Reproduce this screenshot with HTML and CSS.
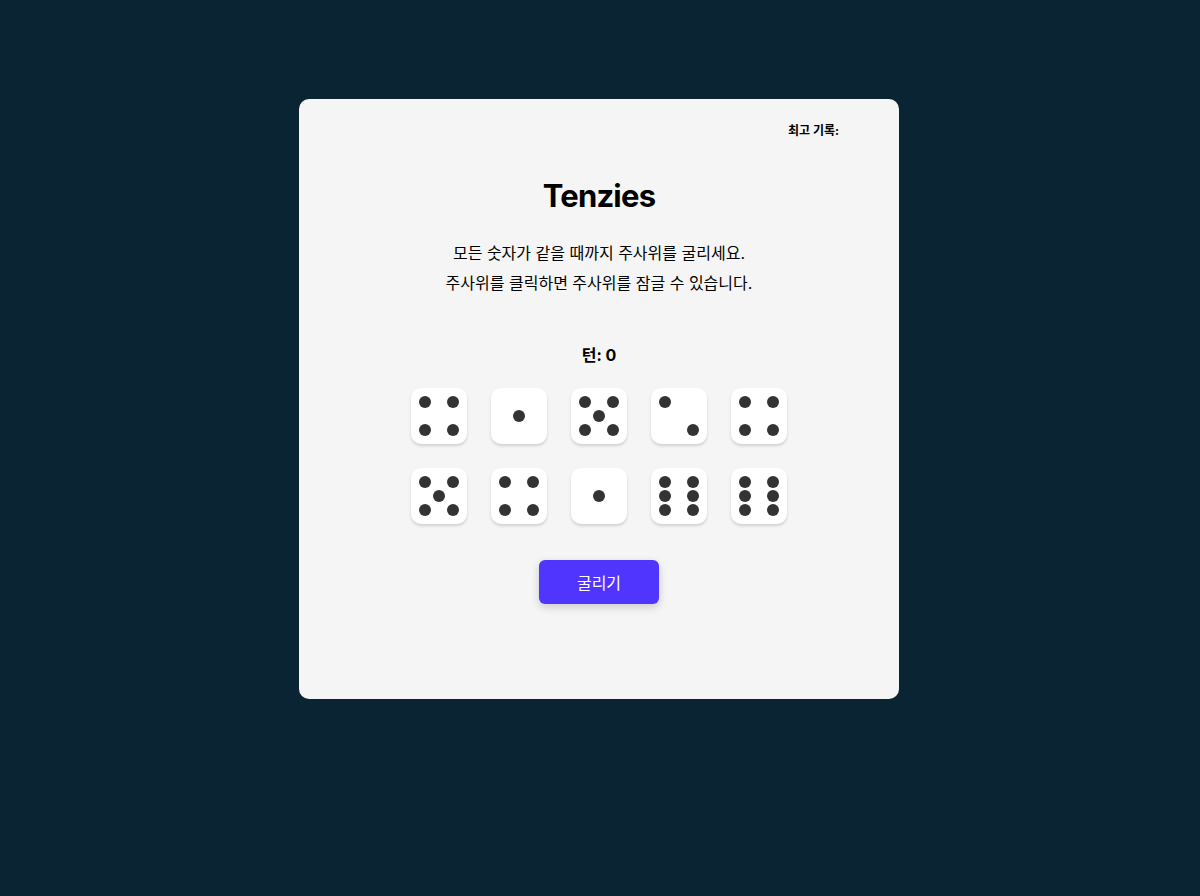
FILE: index.html
```html
<!DOCTYPE html>
<html lang="ko">
<head>
<meta charset="utf-8">
<title>Tenzies</title>
<link rel="stylesheet" href="styles.css">
</head>
<body>
<main class="card">
  <p class="best">최고 기록:</p>
  <h1 class="title">Tenzies</h1>
  <p class="desc">모든 숫자가 같을 때까지 주사위를 굴리세요.<br>주사위를 클릭하면 주사위를 잠글 수 있습니다.</p>
  <p class="turns">턴: 0</p>
  <div class="dice">
    <div class="die"><span class="pip tl"></span><span class="pip tr"></span><span class="pip bl"></span><span class="pip br"></span></div>
    <div class="die"><span class="pip c"></span></div>
    <div class="die"><span class="pip tl"></span><span class="pip tr"></span><span class="pip c"></span><span class="pip bl"></span><span class="pip br"></span></div>
    <div class="die"><span class="pip tl"></span><span class="pip br"></span></div>
    <div class="die"><span class="pip tl"></span><span class="pip tr"></span><span class="pip bl"></span><span class="pip br"></span></div>
    <div class="die"><span class="pip tl"></span><span class="pip tr"></span><span class="pip c"></span><span class="pip bl"></span><span class="pip br"></span></div>
    <div class="die"><span class="pip tl"></span><span class="pip tr"></span><span class="pip bl"></span><span class="pip br"></span></div>
    <div class="die"><span class="pip c"></span></div>
    <div class="die"><span class="pip tl"></span><span class="pip tr"></span><span class="pip ml"></span><span class="pip mr"></span><span class="pip bl"></span><span class="pip br"></span></div>
    <div class="die"><span class="pip tl"></span><span class="pip tr"></span><span class="pip ml"></span><span class="pip mr"></span><span class="pip bl"></span><span class="pip br"></span></div>
  </div>
  <button class="roll">굴리기</button>
</main>
</body>
</html>
```
FILE: styles.css
```css
* { box-sizing: border-box; }
html, body { margin: 0; padding: 0; }
body {
  background: #0B2434;
  min-height: 896px;
  font-family: "Inter", "Noto Sans CJK KR", sans-serif;
  color: #000;
  padding: 99px 2px 0 0;
}
.card {
  width: 600px;
  height: 600px;
  margin: 0 auto;
  background: #F5F5F5;
  border-radius: 10px;
  display: flex;
  flex-direction: column;
  align-items: center;
  padding: 24px 60px 0;
}
.best {
  align-self: flex-end;
  margin: 0;
  font-size: 12px;
  line-height: 16px;
  font-weight: 700;
}
.title {
  margin: 37px 0 0;
  font-size: 31px;
  line-height: 40px;
  font-weight: 700;
  letter-spacing: -0.8px;
}
.desc {
  margin: 22px 0 0;
  font-size: 16px;
  line-height: 30px;
  text-align: center;
}
.turns {
  margin: 45px 0 0;
  font-size: 16px;
  line-height: 24px;
  font-weight: 700;
}
.dice {
  margin-top: 21px;
  display: grid;
  grid-template-columns: repeat(5, 56px);
  grid-auto-rows: 56px;
  gap: 24px;
}
.die {
  background: #fff;
  border-radius: 10px;
  box-shadow: 0 2px 3px rgba(0, 0, 0, 0.15);
  display: grid;
  grid-template-columns: repeat(3, 14px);
  grid-template-rows: repeat(3, 14px);
  padding: 7px;
  place-items: center;
}
.pip {
  width: 12px;
  height: 12px;
  border-radius: 50%;
  background: #333;
}
.tl { grid-area: 1 / 1; }
.tr { grid-area: 1 / 3; }
.ml { grid-area: 2 / 1; }
.mr { grid-area: 2 / 3; }
.c  { grid-area: 2 / 2; }
.bl { grid-area: 3 / 1; }
.br { grid-area: 3 / 3; }
.roll {
  margin-top: 36px;
  width: 120px;
  height: 44px;
  border: none;
  border-radius: 6px;
  background: #5035FF;
  color: #fff;
  font-family: "Inter", "Noto Sans CJK KR", sans-serif;
  font-size: 16px;
  box-shadow: 0 3px 8px rgba(0, 0, 0, 0.18);
  cursor: pointer;
}
```
